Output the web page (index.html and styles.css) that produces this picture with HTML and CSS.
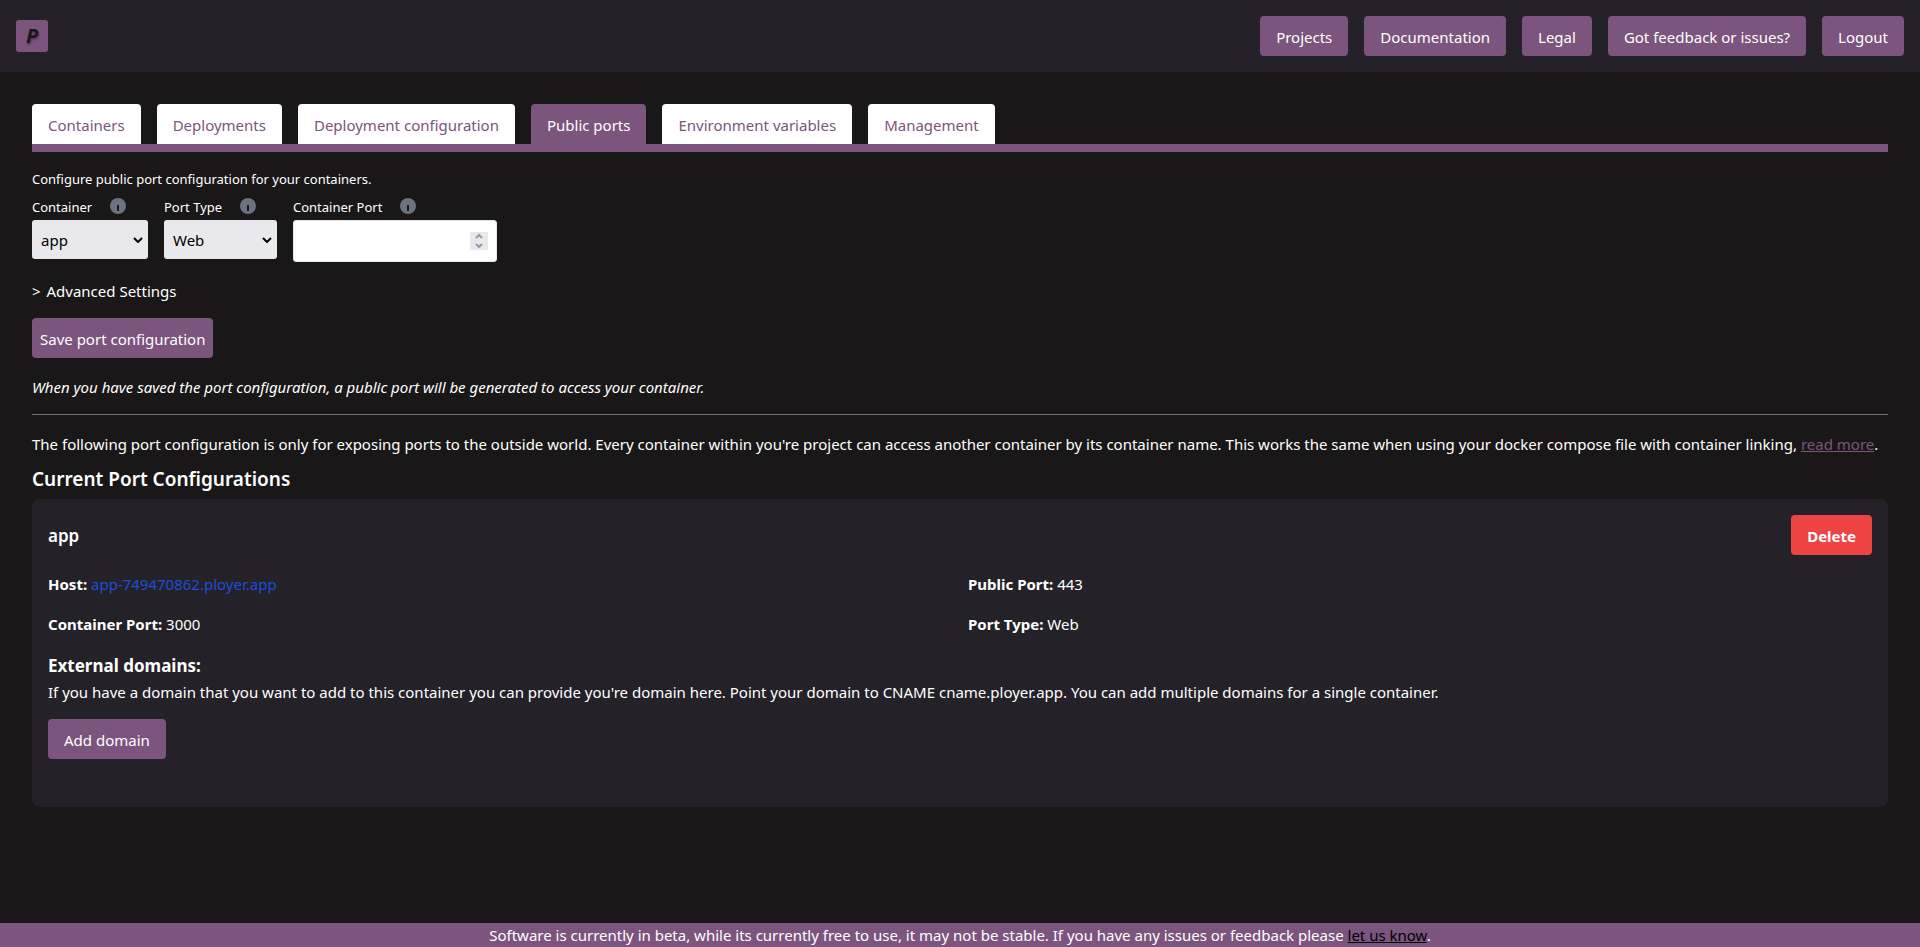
FILE: index.html
```
<!DOCTYPE html>
<html lang="en">
<head>
	<meta charset="utf-8">
	<meta name="viewport" content="width=device-width, initial-scale=1">
	<title>Ployer</title>
	<link rel="stylesheet" href="styles.css">
</head>
<body>
	<header class="header">
		<a class="logo" href="#">P</a>
		<nav class="nav">
			<a class="btn" href="#">Projects</a>
			<a class="btn" href="#">Documentation</a>
			<a class="btn" href="#">Legal</a>
			<a class="btn" href="#">Got feedback or issues?</a>
			<button class="btn" type="button">Logout</button>
		</nav>
	</header>

	<main class="main">
		<nav class="tabs">
			<a class="tab" href="#">Containers</a>
			<a class="tab" href="#">Deployments</a>
			<a class="tab" href="#">Deployment configuration</a>
			<a class="tab active" href="#">Public ports</a>
			<a class="tab" href="#">Environment variables</a>
			<a class="tab" href="#">Management</a>
		</nav>

		<form class="port-form">
			<p class="small">Configure public port configuration for your containers.</p>
			<div class="fields">
				<div class="field">
					<div class="label-row">
						<label for="container">Container</label>
						<svg class="info" viewBox="0 0 16 16"><circle cx="8" cy="8" r="8"/><path d="M7 7h2v6h-2z"/></svg>
					</div>
					<div class="select-wrap container-select">
						<select id="container"><option>app</option></select>
						<svg class="chevron" viewBox="0 0 10 6"><path d="M1 1l4 4 4-4"/></svg>
					</div>
				</div>
				<div class="field">
					<div class="label-row">
						<label for="port-type">Port Type</label>
						<svg class="info" viewBox="0 0 16 16"><circle cx="8" cy="8" r="8"/><path d="M7 7h2v6h-2z"/></svg>
					</div>
					<div class="select-wrap type-select">
						<select id="port-type"><option>Web</option></select>
						<svg class="chevron" viewBox="0 0 10 6"><path d="M1 1l4 4 4-4"/></svg>
					</div>
				</div>
				<div class="field">
					<div class="label-row">
						<label for="port">Container Port</label>
						<svg class="info" viewBox="0 0 16 16"><circle cx="8" cy="8" r="8"/><path d="M7 7h2v6h-2z"/></svg>
					</div>
					<div class="number-wrap">
						<input id="port" type="number">
						<svg class="spinner" viewBox="0 0 18 18"><path d="M6 6l3-3 3 3M6 12l3 3 3-3"/></svg>
					</div>
				</div>
			</div>
			<button class="advanced" type="button"><span>&gt;</span> Advanced Settings</button>
			<button class="btn btn-save" type="submit">Save port configuration</button>
			<p class="note">When you have saved the port configuration, a public port will be generated to access your container.</p>
		</form>

		<hr class="line">

		<p class="intro">The following port configuration is only for exposing ports to the outside world. Every container within you're project can access another container by its container name. This works the same when using your docker compose file with container linking, <a href="#">read more</a>.</p>
		<h2 class="title">Current Port Configurations</h2>

		<section class="card">
			<div class="card-head">
				<h3 class="card-title">app</h3>
				<button class="btn btn-delete" type="button">Delete</button>
			</div>
			<div class="details">
				<p><b>Host:</b> <a href="#">app-749470862.ployer.app</a></p>
				<p><b>Public Port:</b> 443</p>
				<p><b>Container Port:</b> 3000</p>
				<p><b>Port Type:</b> Web</p>
			</div>
			<h3 class="domains-title">External domains:</h3>
			<p>If you have a domain that you want to add to this container you can provide you're domain here. Point your domain to CNAME cname.ployer.app. You can add multiple domains for a single container.</p>
			<button class="btn btn-add" type="button">Add domain</button>
		</section>
	</main>

	<footer class="footer">Software is currently in beta, while its currently free to use, it may not be stable. If you have any issues or feedback please <a href="#">let us know</a>.</footer>
</body>
</html>
```

FILE: styles.css
```
*{
	box-sizing:border-box;
}
body{
	margin:0;
	min-height:100vh;
	display:flex;
	flex-direction:column;
	background-color:#1a1718;
	color:white;
	font-family:"Noto Sans", sans-serif;
	font-size:15px;
	line-height:24px;
}
h2, h3, p{
	margin:0;
}
button, input, select{
	font:inherit;
}
.header{
	display:flex;
	justify-content:space-between;
	align-items:center;
	padding:16px;
	background-color:#242128;
}
.logo{
	width:32px;
	height:32px;
	border-radius:3px;
	background-color:#7b557d;
	color:#1a1718;
	font-size:20px;
	font-style:italic;
	font-weight:bold;
	line-height:32px;
	text-align:center;
	text-decoration:none;
	text-shadow:1px 2px 2px rgba(0,0,0,0.3);
}
.nav{
	display:flex;
	gap:16px;
}
.btn{
	padding:9px 16px 7px;
	border:0;
	border-radius:4px;
	background-color:#7b557d;
	color:white;
	text-decoration:none;
	cursor:pointer;
}
.main{
	flex:1;
	padding:32px;
}
.tabs{
	display:flex;
	gap:16px;
	border-bottom:8px solid #7b557d;
}
.tab{
	padding:9px 16px 7px;
	border-radius:4px 4px 0 0;
	background-color:white;
	color:#7b557d;
	text-decoration:none;
}
.tab.active{
	background-color:#7b557d;
	color:white;
}
.port-form{
	display:flex;
	flex-direction:column;
	align-items:flex-start;
	padding-top:16px;
}
.small{
	font-size:13px;
	line-height:22px;
}
.fields{
	display:flex;
	align-items:flex-start;
	gap:16px;
	padding-top:6px;
}
.label-row{
	display:flex;
	gap:18px;
	height:24px;
	font-size:13px;
	line-height:22px;
}
.info{
	width:16px;
	height:16px;
	margin-top:2px;
	fill:#6b7280;
}
.info path{
	fill:#1a1718;
}
.select-wrap, .number-wrap{
	position:relative;
}
.container-select{
	width:116px;
}
.type-select{
	width:113px;
}
.number-wrap{
	width:204px;
}
select{
	display:block;
	width:100%;
	height:39px;
	padding:0 9px;
	border:0;
	border-radius:3px;
	background-color:#e9e9ed;
	color:black;
	appearance:none;
}
.chevron{
	position:absolute;
	top:17px;
	right:5px;
	width:10px;
	height:6px;
	fill:none;
	stroke:black;
	stroke-width:2;
	pointer-events:none;
}
input{
	display:block;
	width:100%;
	height:42px;
	padding:8px;
	border:1px solid #e5e7eb;
	border-radius:3px;
	background-color:white;
	appearance:textfield;
}
.spinner{
	position:absolute;
	top:12px;
	right:9px;
	width:18px;
	height:18px;
	background-color:#e9e9ed;
	fill:none;
	stroke:#9a98a8;
	stroke-width:2;
	pointer-events:none;
}
.advanced{
	margin:17px 0 15px;
	padding:0;
	border:0;
	background:none;
	color:white;
	cursor:pointer;
}
.advanced span{
	margin-right:2px;
}
.btn-save{
	padding:9px 8px 7px;
}
.note{
	margin-top:17px;
	font-style:italic;
}
.line{
	margin:15px 0 17px;
	border:0;
	border-top:1px solid #757374;
}
.intro a{
	color:#7b557d;
}
.title{
	margin:8px 0 5px;
	font-size:19px;
	font-weight:600;
	line-height:30px;
}
.card{
	padding:16px 16px 48px;
	border-radius:8px;
	background-color:#242128;
}
.card-head{
	display:flex;
	justify-content:space-between;
	align-items:center;
}
.card-title{
	padding-top:2px;
	font-size:17px;
	font-weight:600;
}
.btn-delete{
	background-color:#ef4444;
	font-weight:bold;
}
.details{
	display:grid;
	grid-template-columns:1fr 1fr;
	gap:16px;
	padding:17px 0 16px;
}
.details a{
	color:#1d4ed8;
	text-decoration:none;
}
.domains-title{
	font-size:17px;
	line-height:28px;
}
.btn-add{
	margin-top:15px;
}
.footer{
	background-color:#7b557d;
	text-align:center;
}
.footer a{
	color:black;
}
```
